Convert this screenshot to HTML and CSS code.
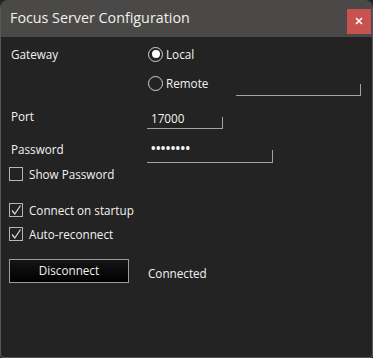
FILE: index.html
```html
<!DOCTYPE html>
<html>
<head>
<meta charset="utf-8">
<link rel="stylesheet" href="styles.css">
</head>
<body>
<div class="window">
  <div class="titlebar">
    <span class="title">Focus Server Configuration</span>
    <span class="close"><svg viewBox="0 0 10 10" width="10" height="10"><path d="M2 2 L8 8 M8 2 L2 8" stroke="#fff" stroke-width="1.6"/></svg></span>
  </div>
  <div class="content">
    <div class="row r-gateway">
      <span class="label">Gateway</span>
      <label class="radio"><span class="dot on"></span><span>Local</span></label>
    </div>
    <div class="row r-remote">
      <span class="label"></span>
      <div class="remote">
        <label class="radio"><span class="dot"></span><span>Remote</span></label>
        <div class="tb tb-remote"></div>
      </div>
    </div>
    <div class="row r-port">
      <span class="label">Port</span>
      <div class="tb tb-port">17000</div>
    </div>
    <div class="row r-pass">
      <span class="label">Password</span>
      <div class="tb tb-pass">&#x2022;&#x2022;&#x2022;&#x2022;&#x2022;&#x2022;&#x2022;&#x2022;</div>
    </div>
    <label class="check r-show"><span class="box"></span><span>Show Password</span></label>
    <label class="check r-connect"><span class="box"><svg viewBox="0 0 14 14" width="14" height="14"><path d="M3 7.5 L5.8 11 L11.5 2.5" fill="none" stroke="#d8d8d8" stroke-width="1.3"/></svg></span><span>Connect on startup</span></label>
    <label class="check r-auto"><span class="box"><svg viewBox="0 0 14 14" width="14" height="14"><path d="M3 7.5 L5.8 11 L11.5 2.5" fill="none" stroke="#d8d8d8" stroke-width="1.3"/></svg></span><span>Auto-reconnect</span></label>
    <div class="row r-btn">
      <button class="btn">Disconnect</button>
      <span class="status">Connected</span>
    </div>
  </div>
</div>
</body>
</html>
```
FILE: styles.css
```css
html, body {
  margin: 0;
  padding: 0;
  background: #232323;
}
body {
  font-family: "Open Sans", "Noto Sans", sans-serif;
  color: #f2f2f2;
  font-size: 11.7px;
}
.window {
  width: 373px;
  height: 358px;
  box-sizing: border-box;
  border: 1px solid #575757;
  border-top: none;
  border-radius: 8px 8px 4px 4px;
  background: #232323;
  overflow: hidden;
  display: flex;
  flex-direction: column;
}
.titlebar {
  height: 37px;
  flex: none;
  background: #4a4947;
  display: flex;
  align-items: center;
  justify-content: space-between;
  padding: 0 1px 0 9px;
}
.title {
  font-size: 14.3px;
  color: #f0f0f0;
  margin-top: -2px;
}
.close {
  width: 24px;
  height: 25px;
  background: #c85250;
  display: flex;
  align-items: center;
  justify-content: center;
  margin-top: 5px;
}
.content {
  display: flex;
  flex-direction: column;
  padding: 5px 0 0 10px;
}
.row {
  display: flex;
  align-items: center;
}
.label {
  width: 137px;
  flex: none;
}
.r-gateway { height: 24px; }
.r-remote { height: 34px; }
.r-port { height: 32px; }
.r-pass { height: 34px; }
.radio {
  display: flex;
  align-items: center;
  gap: 3px;
}
.dot {
  width: 13px;
  height: 13px;
  border: 1.3px solid #cfcfcf;
  border-radius: 50%;
  display: flex;
  align-items: center;
  justify-content: center;
}
.dot.on::after {
  content: "";
  width: 8px;
  height: 8px;
  border-radius: 50%;
  background: #fff;
}
.remote {
  display: flex;
  align-items: center;
  flex: 1;
}
.tb {
  position: relative;
  height: 20px;
  box-sizing: border-box;
  border-bottom: 1px solid #a2a2a2;
  padding-left: 4px;
  display: flex;
  align-items: center;
  color: #f4f4f4;
}
.tb::after {
  content: "";
  position: absolute;
  right: 0;
  bottom: -1px;
  width: 1px;
  height: 12px;
  background: #a2a2a2;
}
.tb-remote {
  width: 125px;
  margin-left: 28px;
  margin-top: 6px;
}
.tb-port {
  width: 76px;
  margin-left: -1px;
  margin-top: 5px;
}
.tb-pass {
  width: 126px;
  margin-left: -1px;
  margin-top: 7px;
  letter-spacing: 0.4px;
  font-size: 12px;
  font-weight: bold;
  padding-left: 4px;
  align-items: flex-start;
  padding-top: 0;
  line-height: 12px;
}
.tb-pass::after { height: 13px; }
.check {
  display: flex;
  align-items: center;
  gap: 6px;
  margin-left: -2px;
  height: 16px;
}
.box {
  width: 14px;
  height: 14px;
  box-sizing: border-box;
  border: 1px solid #b4b4b4;
  flex: none;
  position: relative;
}
.box svg {
  position: absolute;
  left: -1px;
  top: -1px;
}
.r-show { margin-top: 0; }
.r-connect { margin-top: 20px; }
.r-auto { margin-top: 8px; }
.r-btn {
  margin-top: 17px;
  margin-left: -2px;
}
.btn {
  width: 120px;
  height: 24px;
  box-sizing: border-box;
  border: 1px solid #9c9c9c;
  background: linear-gradient(#151515, #000);
  color: #f0f0f0;
  font-family: inherit;
  font-size: 11.7px;
  padding: 0 0 2px;
}
.status {
  margin-left: 19px;
  margin-top: 4px;
}
```
